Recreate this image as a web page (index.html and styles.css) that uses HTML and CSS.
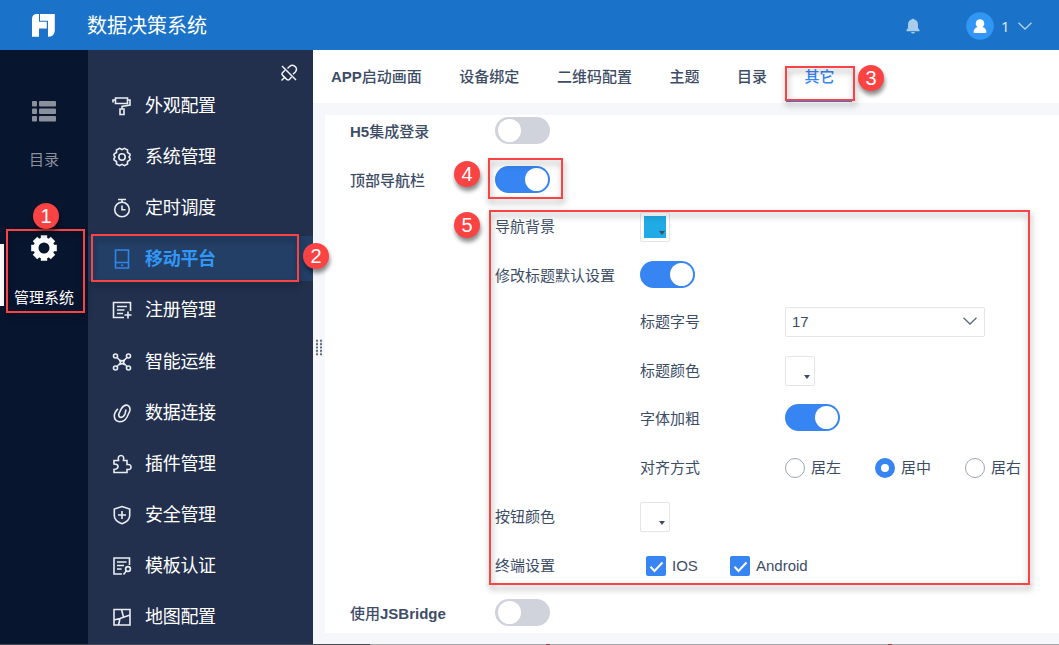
FILE: index.html
```html
<!DOCTYPE html>
<html lang="zh-CN">
<head>
    <meta charset="UTF-8">
    <meta name="viewport" content="width=device-width, initial-scale=1.0">
    <title>数据决策系统</title>
    <link rel="stylesheet" href="styles.css">
</head>
<body>
    <header class="header">
        <svg class="logo" viewBox="0 0 23 23" width="23" height="23">
            <path fill="#fff" d="M5 0H7V7.800H14.800V14.500H7V22.800H0V5Q0 0 5 0Z"/>
            <path fill="#fff" d="M8 0H22.800V16.500Q22.500 22.800 16 22.800V6.800H8Z"/>
        </svg>
        <h1 class="title">数据决策系统</h1>
        <svg class="bell" viewBox="0 0 14 16" width="14" height="16">
            <path fill="#a9cbec" d="M6 1.3Q7-.4 8 1.3Q11.8 2.3 12 6.5V10L13.5 12V13.2H.5V12L2 10V6.5Q2.200 2.300 6 1.300ZM5 14H9Q8.600 15.600 7 15.600Q5.400 15.600 5 14Z"/>
        </svg>
        <svg class="avatar" viewBox="0 0 28 28" width="28" height="28">
            <circle cx="14" cy="14" r="13.8" fill="#3296f5"/>
            <path fill="#fff" d="M14 7.300a4.200 4.200 0 0 1 2.500 7.600Q20.400 16.200 20.400 20.300Q20.400 21 19.600 21H8.400Q7.600 21 7.600 20.300Q7.600 16.200 11.500 14.900A4.200 4.200 0 0 1 14 7.300Z"/>
        </svg>
        <span class="user">1</span>
        <svg class="arrow" viewBox="0 0 14 8" width="14" height="8">
            <path fill="none" stroke="#b5d3ef" stroke-width="1.300" d="M.5.700L7 7L13.500.700"/>
        </svg>
    </header>

    <div class="layout">
        <nav class="rail">
            <a class="rail-item">
                <svg viewBox="0 0 24 21" width="24" height="21" fill="#8b909c">
                    <rect x="0" y="0" width="5" height="5.500" rx="1"/><rect x="7" y="0" width="17" height="5.500" rx="1"/>
                    <rect x="0" y="7.500" width="5" height="5.500" rx="1"/><rect x="7" y="7.500" width="17" height="5.500" rx="1"/>
                    <rect x="0" y="15" width="5" height="5.500" rx="1"/><rect x="7" y="15" width="17" height="5.500" rx="1"/>
                </svg>
                <span>目录</span>
            </a>
            <a class="rail-item current">
                <svg viewBox="-13 -13 26 26" width="26" height="26">
                    <circle r="8" fill="none" stroke="#fff" stroke-width="5"/>
                    <g stroke="#fff" stroke-width="6.400" stroke-linecap="butt">
                        <path d="M0-12.800V-8M0 12.800V8M-12.800 0H-8M12.800 0H8M-9-9L-6-6M9 9L6 6M-9 9L-6 6M9-9L6-6"/>
                    </g>
                </svg>
                <span>管理系统</span>
            </a>
        </nav>

        <aside class="menu">
            <svg class="unpin" viewBox="0 0 18 18" width="18" height="18">
                <path d="M2 2L16 16M1.500 16.500L4.500 13.500M5 6.300L2.700 8.500Q1.300 10 2.700 11.400L6.700 15.400Q8.200 16.600 9.600 15.200L11.500 13M7.500 4.500L9.800 2.300Q12 .500 14.500 2L16 3.500Q17.200 6 15.300 8L13 10.300"/>
            </svg>
            <ul class="menu-list">
                <li>
                    <svg viewBox="0 0 20 20"><path d="M3.500 2H15.500V7.500H3.500ZM3.500 4H1V6.500M15.500 4H18V9L10 10.500V13M8 13H12V18.500H8Z"/></svg>
                    <span>外观配置</span>
                </li>
                <li>
                    <svg viewBox="0 0 20 20"><path d="M7.500 1.300L10 2.700L12.500 1.300L15.500 3V5.500L18 7.200V8.500L17 10L18 11.500V12.800L15.500 14.500V17L12.500 18.700L10 17.300L7.500 18.700L4.500 17V14.500L2 12.800V11.500L3 10L2 8.500V7.200L4.500 5.500V3Z"/><circle cx="10" cy="10" r="3.200"/></svg>
                    <span>系统管理</span>
                </li>
                <li>
                    <svg viewBox="0 0 20 20"><circle cx="10" cy="11.500" r="7.300"/><path d="M6 1.500H14M10 1.500V4M10 7.500V11.700H13.500"/></svg>
                    <span>定时调度</span>
                </li>
                <li class="active">
                    <svg viewBox="0 0 20 20"><path d="M3.500 1H16.500V19H3.500ZM3.500 13.500H16.500M9 16.300H11.200"/></svg>
                    <span>移动平台</span>
                </li>
                <li>
                    <svg viewBox="0 0 20 20"><path d="M12 17.500H1.500V2.500H18.500V11M5 6.500H15M5 10H12.500M5 13.500H11M16 11.500V18.500M12.500 15H19.500"/></svg>
                    <span>注册管理</span>
                </li>
                <li>
                    <svg viewBox="0 0 20 20"><circle cx="3.500" cy="4" r="2"/><circle cx="16.500" cy="4" r="2"/><circle cx="3.500" cy="16" r="2"/><circle cx="16.500" cy="16" r="2"/><path d="M5 5.500L8 8.500M15 5.500L12 8.500M5 14.500L8 11.500M15 14.500L12 11.500M7.500 8L10 9L12.500 8L11.500 10.500L12.500 12.500L10 11.500L7.500 12.500L8.500 10.500Z"/></svg>
                    <span>智能运维</span>
                </li>
                <li>
                    <svg viewBox="0 0 20 20"><path d="M14 6.500L13 11Q11.500 14.500 8.500 14.500Q6 13.500 7 10.500L9.500 5.500Q12 1.500 15.500 2.300Q18.800 4 17.800 8L15 14Q12.500 18.800 7.500 18.800Q2.500 18 2.300 13Q2.300 9 6 5.800"/></svg>
                    <span>数据连接</span>
                </li>
                <li>
                    <svg viewBox="0 0 20 20"><path d="M2 6.500H6.500Q5.500 1.500 9 1.500Q12.500 1.500 11.500 6.500H15V10.500Q19 10 19 13Q19 16 15 15.500V18.500H2V15.500Q6 15 6 12.500Q6 10 2 10Z"/></svg>
                    <span>插件管理</span>
                </li>
                <li>
                    <svg viewBox="0 0 20 20"><path d="M10 1.500L17.700 4V10.500Q17.700 16 10 18.700Q2.300 16 2.300 10.500V4ZM10 6V14M6 10H14"/></svg>
                    <span>安全管理</span>
                </li>
                <li>
                    <svg viewBox="0 0 20 20"><path d="M10 18H2V2H17.500V9M5 6H14.500M5 9.500H12M5 13H9.500M11.500 18.500L14.500 14.800"/><circle cx="16" cy="13" r="2.400"/></svg>
                    <span>模板认证</span>
                </li>
                <li>
                    <svg viewBox="0 0 20 20"><path d="M2 2.500H18V18H2ZM2 13L8 11.500L18 8M9.500 2.500L11.500 10M8 11.500L6.500 18"/></svg>
                    <span>地图配置</span>
                </li>
            </ul>
        </aside>

        <main class="main">
            <div class="tabs">
                <a><b>APP</b>启动画面</a>
                <a>设备绑定</a>
                <a>二维码配置</a>
                <a>主题</a>
                <a>目录</a>
                <a class="on">其它</a>
            </div>
            <div class="panel">
                <div class="row">
                    <span class="label strong"><b>H5</b>集成登录</span>
                    <span class="switch"></span>
                </div>
                <div class="row nav-row">
                    <span class="label strong">顶部导航栏</span>
                    <span class="switch checked"></span>
                </div>
                <div class="group">
                    <div class="row tall">
                        <span class="label">导航背景</span>
                        <span class="swatch"><i class="fill"></i></span>
                    </div>
                    <div class="row">
                        <span class="label">修改标题默认设置</span>
                        <span class="switch checked"></span>
                    </div>
                    <div class="group">
                        <div class="row tall">
                            <span class="label">标题字号</span>
                            <span class="select">17
                                <svg viewBox="0 0 14 8" width="14" height="8"><path fill="none" stroke="#5b6980" stroke-width="1.300" d="M.5.700L7 7L13.500.700"/></svg>
                            </span>
                        </div>
                        <div class="row tall">
                            <span class="label">标题颜色</span>
                            <span class="swatch"></span>
                        </div>
                        <div class="row bold-row">
                            <span class="label">字体加粗</span>
                            <span class="switch checked"></span>
                        </div>
                        <div class="row tall align-row">
                            <span class="label">对齐方式</span>
                            <span class="radio">居左</span>
                            <span class="radio checked">居中</span>
                            <span class="radio">居右</span>
                        </div>
                    </div>
                    <div class="row tall">
                        <span class="label">按钮颜色</span>
                        <span class="swatch"></span>
                    </div>
                    <div class="row tall">
                        <span class="label">终端设置</span>
                        <span class="checkbox ios"><svg viewBox="0 0 20 20" width="20" height="20"><path d="M4.500 10.800L8.500 15L16.500 6.500"/></svg><span>IOS</span></span>
                        <span class="checkbox"><svg viewBox="0 0 20 20" width="20" height="20"><path d="M4.500 10.800L8.500 15L16.500 6.500"/></svg><span>Android</span></span>
                    </div>
                </div>
                <div class="row last-row">
                    <span class="label strong">使用<b>JSBridge</b></span>
                    <span class="switch"></span>
                </div>
            </div>
        </main>
    </div>
    <div class="taskbar"><i></i><i></i></div>

    <!-- splitter handle -->
    <div class="splitter"></div>

    <!-- step marks -->
    <div class="mark mark1"></div>
    <div class="mark mark2"></div>
    <div class="mark mark3"></div>
    <div class="mark mark4"></div>
    <div class="mark mark5"></div>
    <div class="step step1">1</div>
    <div class="step step2">2</div>
    <div class="step step3">3</div>
    <div class="step step4">4</div>
    <div class="step step5">5</div>
</body>
</html>
```
FILE: styles.css
```css
*, *::before, *::after {
    box-sizing: border-box;
}
body {
    position: relative;
    display: flex;
    flex-direction: column;
    width: 1059px;
    height: 645px;
    margin: 0;
    overflow: hidden;
    font-family: "Liberation Sans", "Noto Sans CJK SC", sans-serif;
    font-size: 15px;
    color: #3d4d66;
}
.header {
    display: flex;
    align-items: center;
    height: 50px;
    flex: none;
    padding: 1px 27px 0 32px;
    background: #1a73c8;
    color: #fff;
}
.title {
    margin: 0 auto 0 32px;
    font-size: 20px;
    font-weight: 400;
    line-height: 50px;
}
.bell {
    margin-right: 46px;
}
.user {
    width: 17px;
    margin-left: 7px;
    font-family: "Noto Sans", sans-serif;
    font-size: 15px;
    line-height: 20px;
    color: #d5e5f6;
}
.layout {
    display: flex;
    height: 594px;
}

/* left rail */
.rail {
    width: 88px;
    padding-top: 51px;
    background: #08152e;
    color: #8b909c;
}
.rail-item {
    display: flex;
    flex-direction: column;
    align-items: center;
    justify-content: space-between;
    height: 70px;
    line-height: 22px;
}
.rail-item.current {
    height: 74px;
    margin-top: 64px;
    color: #fff;
    background: linear-gradient(#fff, #fff) 0 9px / 4px 62px no-repeat;
}

/* menu */
.menu {
    display: flex;
    flex-direction: column;
    width: 225px;
    padding-top: 14px;
    background: #22304d;
    color: #fff;
}
.unpin {
    align-self: flex-end;
    margin-right: 15px;
    fill: none;
    stroke: #f0f2f6;
    stroke-width: 1.5;
}
.menu-list {
    margin: -3px 0 0;
    padding: 0;
    list-style: none;
}
.menu-list li {
    display: flex;
    align-items: center;
    height: 51.2px;
    padding-left: 24px;
    font-size: 18px;
}
.menu-list svg {
    width: 20px;
    height: 20px;
    margin: 2px 13px 0 0;
    fill: none;
    stroke: #e9ecf2;
    stroke-width: 1.6;
}
.menu-list span {
    padding-bottom: 2px;
    letter-spacing: -0.3px;
}
.menu-list .active {
    height: 45.2px;
    margin: 3px 0;
    background: #233f66;
    color: #3296f5;
    font-weight: 700;
}
.menu-list .active svg {
    stroke: #2f86ea;
}

/* content */
.main {
    flex: 1;
    background: #f6f7fa;
}
.tabs {
    display: flex;
    gap: 37.5px;
    height: 53px;
    padding-left: 18px;
    background: #fff;
    font-weight: 500;
    line-height: 53px;
}
.tabs .on {
    margin: 0 -18px;
    padding: 0 18px;
    height: 52px;
    border-bottom: 2px solid #3685f2;
    color: #3685f2;
}
.tabs a {
    white-space: nowrap;
}
.tabs b, .label b {
    font-weight: 700;
}
.panel {
    display: flex;
    flex-direction: column;
    gap: 19px;
    height: 518px;
    margin: 12px 0 0 12px;
    padding: 2px 0 0 25px;
    background: #fff;
}
.row {
    display: flex;
    align-items: center;
    height: 27px;
}
.row.tall {
    height: 30px;
}
.nav-row {
    margin-top: 3px;
}
.bold-row {
    margin-top: -1px;
}
.align-row {
    margin-top: 3px;
}
.last-row {
    margin-top: -1px;
}
.label {
    width: 145px;
    flex: none;
}
.tall .label {
    padding-bottom: 3px;
}
.bold-row .label {
    padding-bottom: 1px;
}
.label.strong {
    font-weight: 500;
}
.group {
    display: flex;
    flex-direction: column;
    gap: 19px;
    padding-left: 145px;
}
.switch {
    width: 55px;
    height: 27px;
    padding: 2px 3px;
    border-radius: 14px;
    background: #d0d3dc;
}
.switch::before {
    content: "";
    display: block;
    width: 23px;
    height: 23px;
    border-radius: 50%;
    background: #fff;
}
.switch.checked {
    background: #3685f2;
}
.switch.checked::before {
    margin-left: 27px;
}
.swatch {
    position: relative;
    width: 30px;
    height: 30px;
    padding: 3px;
    border: 1px solid #e3e5e9;
    border-radius: 2px;
}
.swatch .fill {
    display: block;
    height: 22px;
    background: #20abe6;
}
.swatch::after {
    content: "";
    position: absolute;
    right: 4px;
    bottom: 6px;
    border: 3px solid transparent;
    border-top: 4px solid #3d4d66;
    border-bottom: 0;
}
.select {
    display: flex;
    align-items: center;
    justify-content: space-between;
    width: 200px;
    height: 30px;
    padding: 0 7px 2px 6px;
    border: 1px solid #e3e5e9;
    border-radius: 2px;
}
.radio {
    display: flex;
    align-items: center;
    gap: 6px;
    width: 90px;
    height: 20px;
    flex: none;
    line-height: 18px;
}
.radio::before {
    content: "";
    width: 20px;
    height: 20px;
    border: 1px solid #9ea6b2;
    border-radius: 50%;
}
.radio.checked::before {
    border: 6px solid #3685f2;
}
.checkbox {
    display: flex;
    align-items: center;
    gap: 6px;
}
.checkbox span {
    padding-bottom: 2px;
}
.checkbox svg {
    border-radius: 2px;
    background: #3685f2;
    fill: none;
    stroke: #fff;
    stroke-width: 2;
}
.checkbox.ios {
    width: 84px;
    margin-left: 6px;
}
.taskbar {
    display: flex;
    gap: 338px;
    height: 1px;
    padding-left: 546px;
    background: linear-gradient(90deg, #454b55 370px, #a5a6a8 370px);
}
.taskbar i {
    width: 4px;
    background: #b03a45;
}
.splitter {
    position: absolute;
    left: 315px;
    top: 339px;
    width: 8px;
    height: 17px;
    background: radial-gradient(circle, #5d6980 0.8px, transparent 1.5px) 0 0 / 4px 3.4px;
}

/* step marks */
.mark {
    position: absolute;
    border: 2px solid #fb4343;
    filter: drop-shadow(1px 4px 3px rgba(0, 0, 0, 0.4));
}
.mark1 {
    left: 6px;
    top: 229px;
    width: 79px;
    height: 84px;
}
.mark2 {
    left: 91px;
    top: 234px;
    width: 208px;
    height: 48px;
}
.mark3 {
    left: 785px;
    top: 66px;
    width: 70px;
    height: 35px;
}
.mark4 {
    left: 488px;
    top: 158px;
    width: 75px;
    height: 41px;
}
.mark5 {
    left: 489px;
    top: 210px;
    width: 541px;
    height: 375px;
}
.step {
    position: absolute;
    width: 26px;
    height: 26px;
    border-radius: 50%;
    background: #fb4343;
    box-shadow: 1px 4px 4px rgba(0, 0, 0, 0.45);
    color: #fff;
    font-size: 20px;
    line-height: 26px;
    text-align: center;
}
.step1 {
    left: 33px;
    top: 203px;
}
.step2 {
    left: 303px;
    top: 243px;
}
.step3 {
    left: 858px;
    top: 65px;
}
.step4 {
    left: 454px;
    top: 161px;
}
.step5 {
    left: 454px;
    top: 212px;
}
```
